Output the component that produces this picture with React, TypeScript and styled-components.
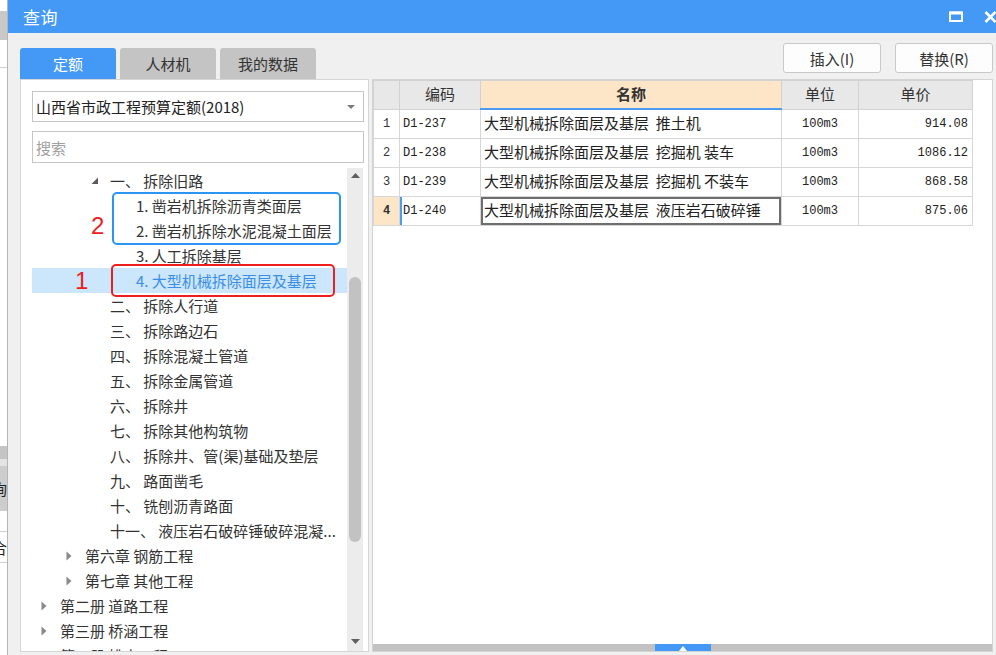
import styled, { createGlobalStyle } from "styled-components";

const GlobalStyle = createGlobalStyle`
  html, body {
    margin: 0;
    padding: 0;
    background: #fff;
    overflow: hidden;
  }
  body {
    font-family: "Noto Sans CJK SC", "Noto Sans", sans-serif;
    color: #333;
  }
`;

type TreeNode = {
  level: number;
  text: string;
  arrow?: "open" | "closed";
  selected?: boolean;
};

const treeNodes: TreeNode[] = [
  { level: 3, text: "一、 拆除旧路", arrow: "open" },
  { level: 4, text: "1. 凿岩机拆除沥青类面层" },
  { level: 4, text: "2. 凿岩机拆除水泥混凝土面层" },
  { level: 4, text: "3. 人工拆除基层" },
  { level: 4, text: "4. 大型机械拆除面层及基层", selected: true },
  { level: 3, text: "二、 拆除人行道" },
  { level: 3, text: "三、 拆除路边石" },
  { level: 3, text: "四、 拆除混凝土管道" },
  { level: 3, text: "五、 拆除金属管道" },
  { level: 3, text: "六、 拆除井" },
  { level: 3, text: "七、 拆除其他构筑物" },
  { level: 3, text: "八、 拆除井、管(渠)基础及垫层" },
  { level: 3, text: "九、 路面凿毛" },
  { level: 3, text: "十、 铣刨沥青路面" },
  { level: 3, text: "十一、 液压岩石破碎锤破碎混凝..." },
  { level: 2, text: "第六章 钢筋工程", arrow: "closed" },
  { level: 2, text: "第七章 其他工程", arrow: "closed" },
  { level: 1, text: "第二册 道路工程", arrow: "closed" },
  { level: 1, text: "第三册 桥涵工程", arrow: "closed" },
  { level: 1, text: "第四册 排水工程", arrow: "closed" },
];

const indents = [0, 8, 33, 58, 84];

type QuotaRow = { no: number; code: string; name: string; unit: string; price: string };

const rows: QuotaRow[] = [
  { no: 1, code: "D1-237", name: "大型机械拆除面层及基层  推土机", unit: "100m3", price: "914.08" },
  { no: 2, code: "D1-238", name: "大型机械拆除面层及基层  挖掘机 装车", unit: "100m3", price: "1086.12" },
  { no: 3, code: "D1-239", name: "大型机械拆除面层及基层  挖掘机 不装车", unit: "100m3", price: "868.58" },
  { no: 4, code: "D1-240", name: "大型机械拆除面层及基层  液压岩石破碎锤", unit: "100m3", price: "875.06" },
];

const selectedRow = 4;

export default function App() {
  return (
    <>
      <GlobalStyle />
      <Screen>
        <BackStrip>
          <StripBlock $h={11} />
          <StripBlock $h={29} $tone="#c8c8c8" />
          <StripBlock $h={27} $line />
          <StripBlock $h={378} />
          <StripBlock $h={13} $tone="#c4c4c4" />
          <StripBlock $h={7} $tone="#e4e4e4" />
          <StripBlock $h={45} $tone="#cdcdcd">
            <StripChar>询</StripChar>
          </StripBlock>
          <StripBlock $h={20} $line />
          <StripBlock $h={30} $line>
            <StripChar>合</StripChar>
          </StripBlock>
        </BackStrip>

        <Dialog>
          <TitleBar>
            <Title>查询</Title>
            <WindowButtons>
              <svg width="14" height="11" viewBox="0 0 14 11">
                <rect x="1" y="1.5" width="12" height="8.5" fill="none" stroke="#fff" strokeWidth="2" />
                <rect x="1" y="0.5" width="12" height="3" fill="#fff" />
              </svg>
              <svg width="13" height="12" viewBox="0 0 13 12">
                <path d="M1.5 1 L11.5 11 M11.5 1 L1.5 11" stroke="#fff" strokeWidth="2.6" />
              </svg>
            </WindowButtons>
          </TitleBar>

          <Body>
            <LeftColumn>
              <Tabs>
                <Tab $active>定额</Tab>
                <Tab>人材机</Tab>
                <Tab>我的数据</Tab>
              </Tabs>
              <LibraryPanel>
                <Select>
                  <span>山西省市政工程预算定额(2018)</span>
                  <Caret />
                </Select>
                <Search placeholder="搜索" />
                <TreeArea>
                  <TreeList>
                    {treeNodes.map((node) => (
                      <TreeRow key={node.text} $indent={indents[node.level]} $selected={node.selected}>
                        <ArrowSlot>
                          {node.arrow === "open" && (
                            <svg width="8" height="8" viewBox="0 0 8 8">
                              <path d="M7 0.5 L7 7 L0.5 7 Z" fill="#5a5a5a" />
                            </svg>
                          )}
                          {node.arrow === "closed" && (
                            <svg width="6" height="10" viewBox="0 0 6 10">
                              <path d="M0.5 0.5 L5.5 5 L0.5 9.5 Z" fill="#8a8a8a" />
                            </svg>
                          )}
                        </ArrowSlot>
                        <TreeLabel>{node.text}</TreeLabel>
                      </TreeRow>
                    ))}
                    <MarkBox $color="#2b95f3" $left={80} $top={24} $width={229} $height={53} />
                    <MarkNumber $left={59} $top={46}>2</MarkNumber>
                    <MarkBox $color="#ef1f1f" $left={79} $top={96} $width={224} $height={33} />
                    <MarkNumber $left={43} $top={101}>1</MarkNumber>
                  </TreeList>
                  <ScrollBar>
                    <ScrollArrow>
                      <svg width="9" height="5" viewBox="0 0 9 5">
                        <path d="M0 5 L4.5 0 L9 5 Z" fill="#606060" />
                      </svg>
                    </ScrollArrow>
                    <ScrollThumb />
                    <ScrollArrow $bottom>
                      <svg width="9" height="5" viewBox="0 0 9 5">
                        <path d="M0 0 L9 0 L4.5 5 Z" fill="#606060" />
                      </svg>
                    </ScrollArrow>
                  </ScrollBar>
                </TreeArea>
              </LibraryPanel>
            </LeftColumn>

            <RightColumn>
              <Toolbar>
                <ActionButton>插入(I)</ActionButton>
                <ActionButton>替换(R)</ActionButton>
              </Toolbar>
              <GridPanel>
                <GridScroll>
                  <Grid>
                    <colgroup>
                      <col style={{ width: 26 }} />
                      <col style={{ width: 81 }} />
                      <col style={{ width: 301 }} />
                      <col style={{ width: 77 }} />
                      <col style={{ width: 114 }} />
                    </colgroup>
                    <thead>
                      <tr>
                        <HeadCell />
                        <HeadCell>编码</HeadCell>
                        <HeadCell $active>名称</HeadCell>
                        <HeadCell>单位</HeadCell>
                        <HeadCell>单价</HeadCell>
                      </tr>
                    </thead>
                    <tbody>
                      {rows.map((r) => {
                        const sel = r.no === selectedRow;
                        return (
                          <tr key={r.code}>
                            <NoCell $selected={sel}>{r.no}</NoCell>
                            <CodeCell $selected={sel}>{r.code}</CodeCell>
                            <NameCell $focused={sel}>{r.name}</NameCell>
                            <MonoCell $align="center">{r.unit}</MonoCell>
                            <MonoCell $align="right">{r.price}</MonoCell>
                          </tr>
                        );
                      })}
                    </tbody>
                  </Grid>
                </GridScroll>
                <SplitBar>
                  <SplitHandle>
                    <svg width="8" height="5" viewBox="0 0 8 5">
                      <path d="M0 5 L4 0 L8 5 Z" fill="#fff" />
                    </svg>
                  </SplitHandle>
                </SplitBar>
              </GridPanel>
            </RightColumn>
          </Body>
        </Dialog>
      </Screen>
    </>
  );
}

const Screen = styled.div`
  display: flex;
  width: 996px;
  height: 655px;
  overflow: hidden;
`;

const BackStrip = styled.div`
  width: 7px;
  flex: none;
  border-right: 1px solid #b5b5b5;
  display: flex;
  flex-direction: column;
  background: #fff;
  overflow: hidden;
`;

const StripBlock = styled.div<{ $h: number; $tone?: string; $line?: boolean }>`
  height: ${(p) => p.$h}px;
  flex: none;
  background: ${(p) => p.$tone ?? "#fff"};
  border-bottom: ${(p) => (p.$line ? "1px solid #cfcfcf" : "none")};
  display: flex;
  align-items: center;
  justify-content: flex-end;
  overflow: hidden;
`;

const StripChar = styled.span`
  font-size: 15px;
  color: #222;
  flex: none;
`;

const Dialog = styled.div`
  flex: 1;
  display: flex;
  flex-direction: column;
  min-width: 0;
`;

const TitleBar = styled.div`
  height: 33px;
  flex: none;
  background: #4499f7;
  display: flex;
  align-items: center;
  justify-content: space-between;
  padding-left: 15px;
`;

const Title = styled.span`
  color: #fff;
  font-size: 17px;
  letter-spacing: 0.5px;
`;

const WindowButtons = styled.div`
  display: flex;
  align-items: center;
  gap: 21px;
  margin-right: -1px;
`;

const Body = styled.div`
  flex: 1;
  background: #f0f0f0;
  display: grid;
  grid-template-columns: 349px 621px;
  column-gap: 3px;
  padding: 0 3px 3px 12px;
  min-height: 0;
`;

const LeftColumn = styled.div`
  display: flex;
  flex-direction: column;
  padding-top: 15px;
  min-height: 0;
`;

const Tabs = styled.div`
  display: flex;
  gap: 4px;
  height: 31px;
  flex: none;
`;

const Tab = styled.div<{ $active?: boolean }>`
  width: 96px;
  display: flex;
  align-items: center;
  justify-content: center;
  font-size: 15px;
  border-radius: 3px 3px 0 0;
  background: ${(p) => (p.$active ? "#4499f7" : "#c4c4c4")};
  color: ${(p) => (p.$active ? "#fff" : "#333")};
`;

const LibraryPanel = styled.div`
  flex: 1;
  background: #fff;
  border: 1px solid #d6d6d6;
  padding: 11px 4px 0 11px;
  display: flex;
  flex-direction: column;
  min-height: 0;
`;

const Select = styled.div`
  height: 31px;
  box-sizing: border-box;
  border: 1px solid #c6c6c6;
  display: flex;
  align-items: center;
  justify-content: space-between;
  padding: 0 8px 0 3px;
  font-size: 15px;
  color: #222;
  flex: none;
`;

const Caret = styled.span`
  width: 0;
  height: 0;
  border-left: 4px solid transparent;
  border-right: 4px solid transparent;
  border-top: 4px solid #7a7a7a;
`;

const Search = styled.input`
  height: 32px;
  box-sizing: border-box;
  margin-top: 9px;
  border: 1px solid #c6c6c6;
  padding: 0 3px;
  font-family: inherit;
  font-size: 15px;
  outline: none;
  flex: none;
  &::placeholder {
    color: #a0a0a0;
  }
`;

const TreeArea = styled.div`
  flex: 1;
  margin-top: 5px;
  display: flex;
  min-height: 0;
`;

const TreeList = styled.div`
  flex: 1;
  position: relative;
  overflow: hidden;
  min-width: 0;
`;

const TreeRow = styled.div<{ $indent: number; $selected?: boolean }>`
  height: 25px;
  display: flex;
  align-items: center;
  padding-left: ${(p) => p.$indent}px;
  padding-right: 8px;
  font-size: 15px;
  white-space: nowrap;
  background: ${(p) => (p.$selected ? "#cce6fb" : "transparent")};
  color: ${(p) => (p.$selected ? "#3a8ee6" : "#333")};
`;

const ArrowSlot = styled.span`
  width: 20px;
  flex: none;
  display: flex;
  align-items: center;
  padding-left: 1px;
  box-sizing: border-box;
`;

const TreeLabel = styled.span`
  overflow: hidden;
  min-width: 0;
`;

const MarkBox = styled.div<{ $color: string; $left: number; $top: number; $width: number; $height: number }>`
  position: absolute;
  left: ${(p) => p.$left}px;
  top: ${(p) => p.$top}px;
  width: ${(p) => p.$width}px;
  height: ${(p) => p.$height}px;
  box-sizing: border-box;
  border: 2.5px solid ${(p) => p.$color};
  border-radius: 5px;
  pointer-events: none;
`;

const MarkNumber = styled.span<{ $left: number; $top: number }>`
  position: absolute;
  left: ${(p) => p.$left}px;
  top: ${(p) => p.$top}px;
  font-family: "Liberation Sans", Arial, sans-serif;
  font-size: 24px;
  line-height: 24px;
  color: #ee1d1d;
`;

const ScrollBar = styled.div`
  width: 16px;
  flex: none;
  margin-right: 1px;
  background: #ececec;
  display: flex;
  flex-direction: column;
  align-items: center;
`;

const ScrollArrow = styled.div<{ $bottom?: boolean }>`
  height: 14px;
  flex: none;
  display: flex;
  align-items: center;
  justify-content: center;
  margin-top: ${(p) => (p.$bottom ? "auto" : "0")};
  margin-bottom: ${(p) => (p.$bottom ? "3px" : "0")};
`;

const ScrollThumb = styled.div`
  width: 12px;
  height: 265px;
  margin-top: 95px;
  border-radius: 6px;
  background: #c2c2c2;
`;

const RightColumn = styled.div`
  display: flex;
  flex-direction: column;
  padding-top: 10px;
  min-height: 0;
`;

const Toolbar = styled.div`
  display: flex;
  justify-content: flex-end;
  gap: 14px;
  height: 30px;
  flex: none;
  margin-bottom: 6px;
`;

const ActionButton = styled.button`
  width: 98px;
  height: 30px;
  box-sizing: border-box;
  border: 1px solid #c9c9c9;
  border-radius: 3px;
  background: #fdfdfd;
  font-family: inherit;
  font-size: 15px;
  color: #333;
  padding: 0;
`;

const GridPanel = styled.div`
  flex: 1;
  background: #fff;
  border: 1px solid #d4d4d4;
  display: flex;
  flex-direction: column;
  min-height: 0;
`;

const GridScroll = styled.div`
  flex: 1;
  min-height: 0;
  overflow: hidden;
`;

const Grid = styled.table`
  border-collapse: collapse;
  table-layout: fixed;
  width: 599px;
`;

const HeadCell = styled.th<{ $active?: boolean }>`
  height: 25px;
  padding: 0 0 2px;
  border: 1px solid #d2d2d2;
  border-bottom: ${(p) => (p.$active ? "2px solid #4c9cf2" : "1px solid #d2d2d2")};
  background: ${(p) => (p.$active ? "#fde6c8" : "#e8e8e8")};
  font-size: 15px;
  line-height: 20px;
  font-weight: ${(p) => (p.$active ? 700 : 400)};
  color: #333;
  text-align: center;
`;

const BodyCell = styled.td`
  height: 28px;
  padding: 0;
  border: 1px solid #d6d6d6;
  white-space: nowrap;
  overflow: hidden;
  line-height: 20px;
`;

const NoCell = styled(BodyCell)<{ $selected?: boolean }>`
  text-align: center;
  font-family: "Liberation Mono", monospace;
  font-size: 12px;
  font-weight: ${(p) => (p.$selected ? 700 : 400)};
  background: ${(p) => (p.$selected ? "#fde6c8" : "#fff")};
`;

const CodeCell = styled(BodyCell)<{ $selected?: boolean }>`
  padding-left: 3px;
  font-family: "Liberation Mono", monospace;
  font-size: 12px;
  color: #222;
  box-shadow: ${(p) => (p.$selected ? "inset 2px 0 0 #4c9cf2" : "none")};
`;

const NameCell = styled(BodyCell)<{ $focused?: boolean }>`
  height: 25px;
  padding: 0 0 3px 3px;
  font-size: 15px;
  color: #222;
  white-space: pre;
  box-shadow: ${(p) => (p.$focused ? "inset 0 0 0 2px #6e6e6e" : "none")};
`;

const MonoCell = styled(BodyCell)<{ $align: "center" | "right" }>`
  text-align: ${(p) => p.$align};
  padding-right: ${(p) => (p.$align === "right" ? "4px" : "0")};
  font-family: "Liberation Mono", monospace;
  font-size: 12px;
  color: #222;
`;

const SplitBar = styled.div`
  height: 7px;
  flex: none;
  background: #c2c2c2;
  display: flex;
  justify-content: center;
`;

const SplitHandle = styled.div`
  width: 56px;
  background: #4499f7;
  display: flex;
  align-items: flex-end;
  justify-content: center;
`;
